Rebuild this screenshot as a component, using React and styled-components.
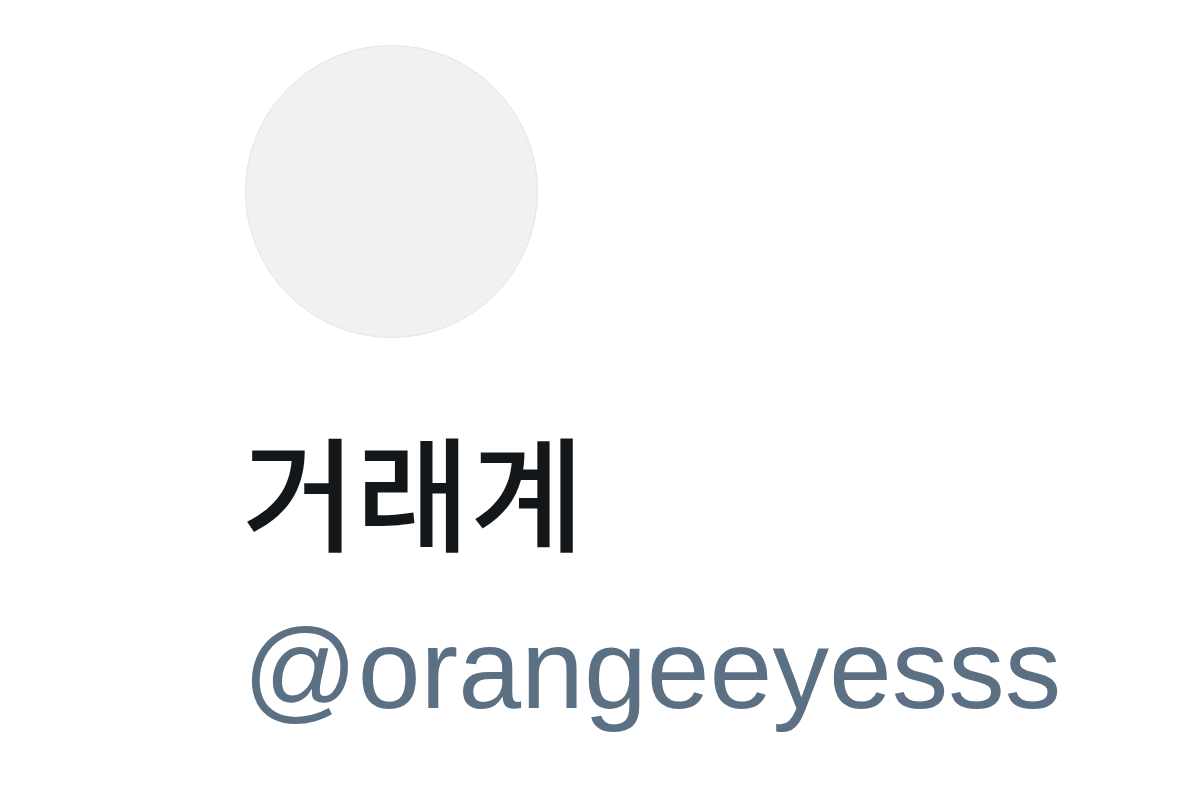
import React from "react";
import styled, { createGlobalStyle } from "styled-components";

const Global = createGlobalStyle`
  html, body { margin: 0; padding: 0; background: #ffffff; }
  body { width: 1200px; height: 791px; overflow: hidden; }
`;

const Page = styled.div`
  width: 1200px;
  height: 791px;
  box-sizing: border-box;
  padding: 45px 0 0 245px;
  display: flex;
  flex-direction: column;
  align-items: flex-start;
  background: #ffffff;
`;

const Avatar = styled.div`
  width: 293px;
  height: 293px;
  box-sizing: border-box;
  border-radius: 50%;
  background: #f1f1f1;
  border: 1.5px solid #e4e4e4;
`;

const Name = styled.h1`
  margin: 88px 0 0 -3px;
  font-family: "Noto Sans CJK KR", "Noto Sans", sans-serif;
  font-weight: 500;
  font-size: 124px;
  line-height: 1;
  color: #14171a;
  letter-spacing: 0;
`;

const Handle = styled.div`
  margin: 63px 0 0 -2px;
  font-family: "Liberation Sans", Arial, sans-serif;
  font-weight: 400;
  font-size: 113px;
  line-height: 1;
  color: #5b7083;
`;

export default function App() {
  return (
    <>
      <Global />
      <Page>
        <Avatar />
        <Name>거래계</Name>
        <Handle>@orangeeyesss</Handle>
      </Page>
    </>
  );
}
